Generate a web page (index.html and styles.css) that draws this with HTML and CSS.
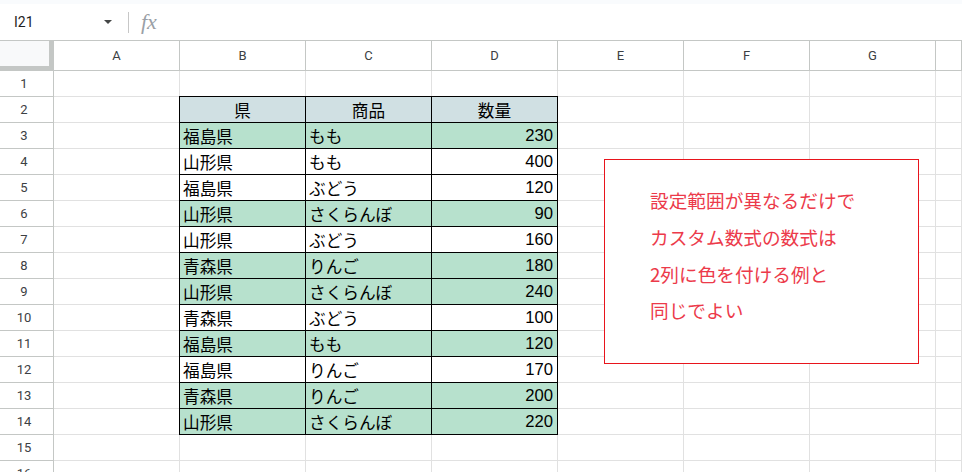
FILE: index.html
```html
<!DOCTYPE html>
<html lang="ja">
<head>
  <meta charset="UTF-8">
  <meta name="viewport" content="width=device-width, initial-scale=1.0">
  <title>条件付き書式</title>
  <link rel="stylesheet" href="styles.css">
</head>
<body>
  <div class="top-strip"></div>

  <!-- Name box and formula bar -->
  <div class="formula-bar">
    <div class="name-box">
      <span>I21</span>
      <span class="caret"></span>
    </div>
    <span class="divider"></span>
    <span class="fx">fx</span>
  </div>

  <!-- Sheet grid -->
  <div class="sheet">
    <div class="row">
      <div class="corner"></div>
      <div class="col">A</div>
      <div class="col">B</div>
      <div class="col">C</div>
      <div class="col">D</div>
      <div class="col">E</div>
      <div class="col">F</div>
      <div class="col">G</div>
      <div class="col"></div>
    </div>

    <div class="row">
      <div class="rh">1</div>
      <div class="cell"></div><div class="cell"></div><div class="cell"></div><div class="cell"></div>
      <div class="cell"></div><div class="cell"></div><div class="cell"></div><div class="cell"></div>
    </div>

    <div class="row">
      <div class="rh">2</div>
      <div class="cell"></div>
      <div class="cell t head">県</div>
      <div class="cell t head">商品</div>
      <div class="cell t head">数量</div>
      <div class="cell"></div><div class="cell"></div><div class="cell"></div><div class="cell"></div>
    </div>

    <div class="row">
      <div class="rh">3</div>
      <div class="cell"></div>
      <div class="cell t green">福島県</div>
      <div class="cell t green">もも</div>
      <div class="cell t green num">230</div>
      <div class="cell"></div><div class="cell"></div><div class="cell"></div><div class="cell"></div>
    </div>

    <div class="row">
      <div class="rh">4</div>
      <div class="cell"></div>
      <div class="cell t">山形県</div>
      <div class="cell t">もも</div>
      <div class="cell t num">400</div>
      <div class="cell"></div><div class="cell"></div><div class="cell"></div><div class="cell"></div>
    </div>

    <div class="row">
      <div class="rh">5</div>
      <div class="cell"></div>
      <div class="cell t">福島県</div>
      <div class="cell t">ぶどう</div>
      <div class="cell t num">120</div>
      <div class="cell"></div><div class="cell"></div><div class="cell"></div><div class="cell"></div>
    </div>

    <div class="row">
      <div class="rh">6</div>
      <div class="cell"></div>
      <div class="cell t green">山形県</div>
      <div class="cell t green">さくらんぼ</div>
      <div class="cell t green num">90</div>
      <div class="cell"></div><div class="cell"></div><div class="cell"></div><div class="cell"></div>
    </div>

    <div class="row">
      <div class="rh">7</div>
      <div class="cell"></div>
      <div class="cell t">山形県</div>
      <div class="cell t">ぶどう</div>
      <div class="cell t num">160</div>
      <div class="cell"></div><div class="cell"></div><div class="cell"></div><div class="cell"></div>
    </div>

    <div class="row">
      <div class="rh">8</div>
      <div class="cell"></div>
      <div class="cell t green">青森県</div>
      <div class="cell t green">りんご</div>
      <div class="cell t green num">180</div>
      <div class="cell"></div><div class="cell"></div><div class="cell"></div><div class="cell"></div>
    </div>

    <div class="row">
      <div class="rh">9</div>
      <div class="cell"></div>
      <div class="cell t green">山形県</div>
      <div class="cell t green">さくらんぼ</div>
      <div class="cell t green num">240</div>
      <div class="cell"></div><div class="cell"></div><div class="cell"></div><div class="cell"></div>
    </div>

    <div class="row">
      <div class="rh">10</div>
      <div class="cell"></div>
      <div class="cell t">青森県</div>
      <div class="cell t">ぶどう</div>
      <div class="cell t num">100</div>
      <div class="cell"></div><div class="cell"></div><div class="cell"></div><div class="cell"></div>
    </div>

    <div class="row">
      <div class="rh">11</div>
      <div class="cell"></div>
      <div class="cell t green">福島県</div>
      <div class="cell t green">もも</div>
      <div class="cell t green num">120</div>
      <div class="cell"></div><div class="cell"></div><div class="cell"></div><div class="cell"></div>
    </div>

    <div class="row">
      <div class="rh">12</div>
      <div class="cell"></div>
      <div class="cell t">福島県</div>
      <div class="cell t">りんご</div>
      <div class="cell t num">170</div>
      <div class="cell"></div><div class="cell"></div><div class="cell"></div><div class="cell"></div>
    </div>

    <div class="row">
      <div class="rh">13</div>
      <div class="cell"></div>
      <div class="cell t green">青森県</div>
      <div class="cell t green">りんご</div>
      <div class="cell t green num">200</div>
      <div class="cell"></div><div class="cell"></div><div class="cell"></div><div class="cell"></div>
    </div>

    <div class="row">
      <div class="rh">14</div>
      <div class="cell"></div>
      <div class="cell t green">山形県</div>
      <div class="cell t green">さくらんぼ</div>
      <div class="cell t green num">220</div>
      <div class="cell"></div><div class="cell"></div><div class="cell"></div><div class="cell"></div>
    </div>

    <div class="row">
      <div class="rh">15</div>
      <div class="cell"></div><div class="cell"></div><div class="cell"></div><div class="cell"></div>
      <div class="cell"></div><div class="cell"></div><div class="cell"></div><div class="cell"></div>
    </div>

    <div class="row">
      <div class="rh">16</div>
      <div class="cell"></div><div class="cell"></div><div class="cell"></div><div class="cell"></div>
      <div class="cell"></div><div class="cell"></div><div class="cell"></div><div class="cell"></div>
    </div>
  </div>

  <!-- Text box drawn over the sheet -->
  <div class="note">
    設定範囲が異なるだけで<br>
    カスタム数式の数式は<br>
    2列に色を付ける例と<br>
    同じでよい
  </div>
</body>
</html>
```

FILE: styles.css
```css
body {
  margin: 0;
  font-family: Roboto, "Liberation Sans", Arial, sans-serif;
  background-color: #fff;
  height: 472px;
  overflow: hidden;
  position: relative;
}

.top-strip {
  height: 4px;
  background-color: #f9fbfd;
}

/* Name box + fx */
.formula-bar {
  height: 36px;
  display: flex;
  align-items: center;
}

.name-box {
  width: 112px;
  box-sizing: border-box;
  padding-left: 14px;
  display: flex;
  align-items: center;
  font-size: 14px;
  color: #1f1f1f;
}

.caret {
  margin-left: auto;
  width: 0;
  height: 0;
  border-left: 4px solid transparent;
  border-right: 4px solid transparent;
  border-top: 4px solid #444746;
}

.divider {
  margin-left: 16px;
  width: 1px;
  height: 21px;
  background-color: #c7c7c7;
}

.fx {
  margin-left: 12px;
  font-family: "Liberation Serif", serif;
  font-style: italic;
  font-size: 22px;
  line-height: 22px;
  color: #9aa0a6;
}

/* Grid */
.sheet {
  display: grid;
  grid-template-columns: 54px repeat(7, 126px) 1fr;
  grid-template-rows: 31px;
  grid-auto-rows: 26px;
}

.row {
  display: contents;
}

.corner,
.col,
.rh,
.cell {
  box-sizing: border-box;
  display: flex;
  align-items: center;
  white-space: nowrap;
  background-color: #fff;
}

.corner {
  background-color: #f8f9fa;
  border-top: 1px solid #c4c7c5;
  border-right: 5px solid #c4c7c5;
  border-bottom: 5px solid #c4c7c5;
}

.col {
  justify-content: center;
  border-top: 1px solid #c4c7c5;
  border-right: 1px solid #c4c7c5;
  border-bottom: 1px solid #c4c7c5;
  font-size: 13px;
  color: #3c4043;
}

.rh {
  justify-content: center;
  padding-right: 5px;
  border-right: 1px solid #c4c7c5;
  border-bottom: 1px solid #c4c7c5;
  font-size: 13px;
  color: #3c4043;
}

.cell {
  padding: 0 3px;
  border-right: 1px solid #e1e1e1;
  border-bottom: 1px solid #e1e1e1;
  font-family: "Liberation Sans", "Noto Sans CJK JP", sans-serif;
  font-size: 16.67px;
  color: #000;
}

/* Data table: black borders, left and top ones drawn over the neighbour cells */
.cell.t {
  border-right-color: #000;
  border-bottom-color: #000;
  box-shadow: -1px -1px 0 #000, 0 -1px 0 #000, -1px 0 0 #000;
}

.cell.head {
  justify-content: center;
  background-color: #d0e0e3;
}

.cell.green {
  background-color: #b7e1cd;
}

.cell.num {
  justify-content: flex-end;
  padding-right: 4px;
}

/* Callout */
.note {
  position: absolute;
  left: 604px;
  top: 159px;
  width: 315px;
  height: 205px;
  box-sizing: border-box;
  border: 1px solid #e8141c;
  background-color: #fff;
  padding: 22px 0 0 45px;
  font-family: "Noto Sans CJK JP", sans-serif;
  font-size: 18.67px;
  line-height: 36.8px;
  color: #ec3a4a;
}
```
